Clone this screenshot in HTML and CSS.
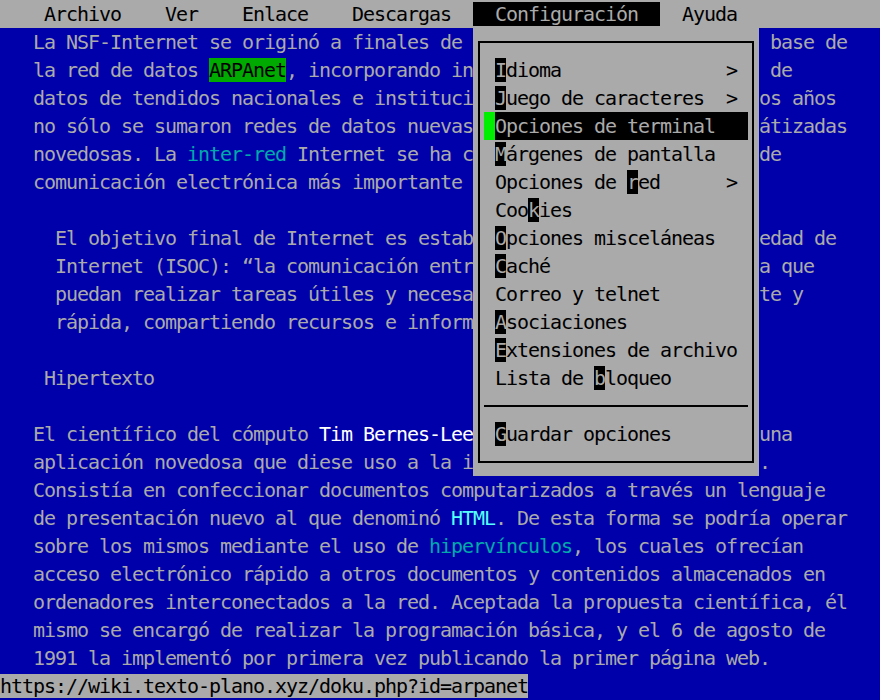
FILE: index.html
```html
<!DOCTYPE html>
<html lang="es">
<head>
<meta charset="utf-8">
<title>ARPAnet - links</title>
<link rel="stylesheet" href="styles.css">
</head>
<body>
<div class="screen">
  <div class="row menubar">    Archivo    Ver    Enlace    Descargas  <span class="active">  Configuración  </span>  Ayuda</div>
  <div class="page">
    <div class="row">   La NSF-Internet se originó a finales de <span class="past"> base de</span></div>
    <div class="row">   la red de datos <span class="link-sel">ARPAnet</span>, incorporando in<span class="past"> de</span></div>
    <div class="row">   datos de tendidos nacionales e instituci<span class="past">os años</span></div>
    <div class="row">   no sólo se sumaron redes de datos nuevas<span class="past">átizadas</span></div>
    <div class="row">   novedosas. La <span class="link">inter-red</span> Internet se ha c<span class="past">de</span></div>
    <div class="row">   comunicación electrónica más importante</div>
    <div class="row"></div>
    <div class="row">     El objetivo final de Internet es estab<span class="past">edad de</span></div>
    <div class="row">     Internet (ISOC): “la comunicación entr<span class="past">a que</span></div>
    <div class="row">     puedan realizar tareas útiles y necesa<span class="past">te y</span></div>
    <div class="row">     rápida, compartiendo recursos e inform</div>
    <div class="row"></div>
    <div class="row">    Hipertexto</div>
    <div class="row"></div>
    <div class="row">   El científico del cómputo <span class="bright">Tim Bernes-Lee</span><span class="past">una</span></div>
    <div class="row">   aplicación novedosa que diese uso a la i<span class="past">.</span></div>
    <div class="row">   Consistía en confeccionar documentos computarizados a través un lenguaje</div>
    <div class="row">   de presentación nuevo al que denominó <span class="link-hi">HTML</span>. De esta forma se podría operar</div>
    <div class="row">   sobre los mismos mediante el uso de <span class="link">hipervínculos</span>, los cuales ofrecían</div>
    <div class="row">   acceso electrónico rápido a otros documentos y contenidos almacenados en</div>
    <div class="row">   ordenadores interconectados a la red. Aceptada la propuesta científica, él</div>
    <div class="row">   mismo se encargó de realizar la programación básica, y el 6 de agosto de</div>
    <div class="row">   1991 la implementó por primera vez publicando la primer página web.</div>
  </div>
  <div class="row status"><span class="url">https://wiki.texto-plano.xyz/doku.php?id=arpanet</span></div>

  <div class="dropdown">
    <div class="box">
      <div class="item"><span class="cur"></span><span class="label"><span><span class="hk">I</span>dioma</span><span>&gt;</span></span></div>
      <div class="item"><span class="cur"></span><span class="label"><span><span class="hk">J</span>uego de caracteres</span><span>&gt;</span></span></div>
      <div class="item sel"><span class="cur"></span><span class="label"><span>Opciones de terminal</span></span></div>
      <div class="item"><span class="cur"></span><span class="label"><span><span class="hk">M</span>árgenes de pantalla</span></span></div>
      <div class="item"><span class="cur"></span><span class="label"><span>Opciones de <span class="hk">r</span>ed</span><span>&gt;</span></span></div>
      <div class="item"><span class="cur"></span><span class="label"><span>Coo<span class="hk">k</span>ies</span></span></div>
      <div class="item"><span class="cur"></span><span class="label"><span><span class="hk">O</span>pciones misceláneas</span></span></div>
      <div class="item"><span class="cur"></span><span class="label"><span><span class="hk">C</span>aché</span></span></div>
      <div class="item"><span class="cur"></span><span class="label"><span>Correo y telnet</span></span></div>
      <div class="item"><span class="cur"></span><span class="label"><span><span class="hk">A</span>sociaciones</span></span></div>
      <div class="item"><span class="cur"></span><span class="label"><span><span class="hk">E</span>xtensiones de archivo</span></span></div>
      <div class="item"><span class="cur"></span><span class="label"><span>Lista de <span class="hk">b</span>loqueo</span></span></div>
      <div class="sep"></div>
      <div class="item"><span class="cur"></span><span class="label"><span><span class="hk">G</span>uardar opciones</span></span></div>
    </div>
  </div>
</div>
</body>
</html>
```

FILE: styles.css
```css
html, body {
  margin: 0;
  padding: 0;
  background: #0000aa;
}

.screen {
  position: relative;
  width: 880px;
  height: 700px;
  overflow: hidden;
  background: #0000aa;
  color: #aaaaaa;
  font-family: "DejaVu Sans Mono", monospace;
  font-size: 20px;
  line-height: 28px;
  letter-spacing: -1.041px;
}

.row {
  height: 28px;
  white-space: pre;
}

/* text that continues to the right of the open menu (26 columns further) */
.past {
  margin-left: 286px;
}

.menubar {
  background: #aaaaaa;
  color: #000000;
}

.menubar .active {
  background: #000000;
  color: #aaaaaa;
}

.link {
  color: #00aaaa;
}

.link-hi {
  color: #55ffff;
}

.link-sel {
  background: #00aa00;
  color: #000000;
}

.bright {
  color: #ffffff;
}

.status .url {
  background: #aaaaaa;
  color: #000000;
}

.dropdown {
  position: absolute;
  left: 473px;
  top: 28px;
  width: 286px;
  height: 448px;
  box-sizing: border-box;
  padding: 13px 5px;
  background: #aaaaaa;
  color: #000000;
}

.box {
  height: 100%;
  box-sizing: border-box;
  border: 2px solid #000000;
  padding: 13px 4px;
}

.item {
  display: flex;
  height: 28px;
}

.cur {
  width: 11px;
  flex: none;
}

.label {
  flex: 1;
  display: flex;
  justify-content: space-between;
  padding-right: 11px;
  white-space: pre;
}

.hk {
  background: #000000;
  color: #aaaaaa;
}

.item.sel .label {
  background: #000000;
  color: #aaaaaa;
}

.item.sel .cur {
  background: #00ee00;
}

.sep {
  height: 28px;
  display: flex;
  align-items: center;
}

.sep::after {
  content: "";
  flex: 1;
  height: 2px;
  background: #000000;
}
```
